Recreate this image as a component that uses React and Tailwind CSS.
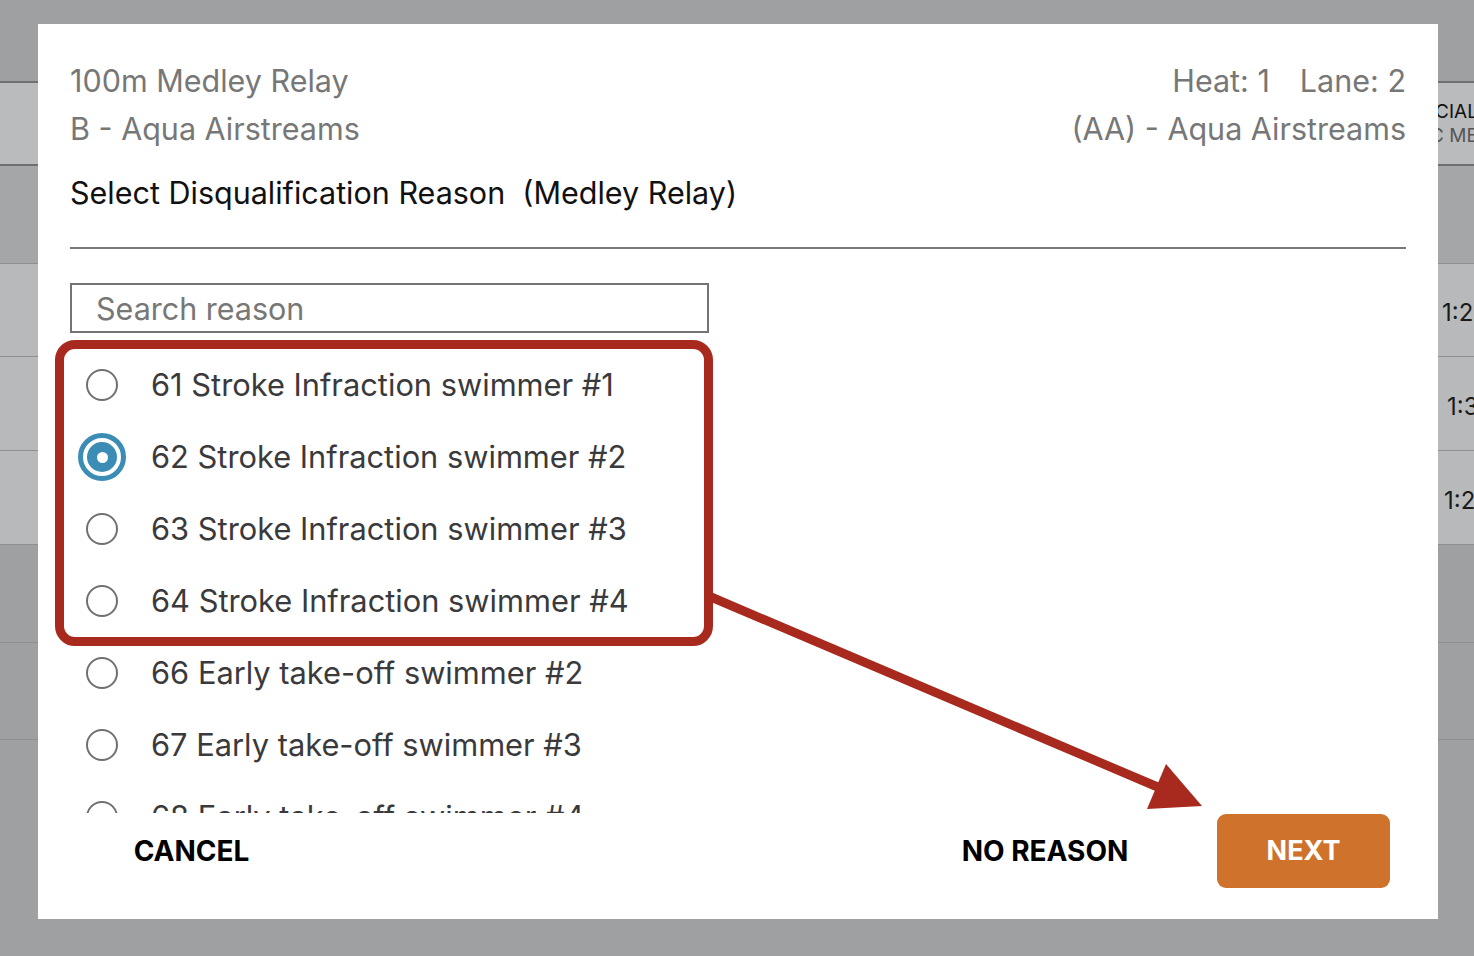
import React, { useState } from 'react';

const reasons = [
    { code: 61, label: 'Stroke Infraction swimmer #1' },
    { code: 62, label: 'Stroke Infraction swimmer #2' },
    { code: 63, label: 'Stroke Infraction swimmer #3' },
    { code: 64, label: 'Stroke Infraction swimmer #4' },
    { code: 66, label: 'Early take-off swimmer #2' },
    { code: 67, label: 'Early take-off swimmer #3' },
    { code: 68, label: 'Early take-off swimmer #4' },
];

const Radio = ({ checked }) => (
    <div className="w-[48px] h-[48px] flex items-center justify-center shrink-0">
        {checked ? (
            <div className="w-[48px] h-[48px] rounded-full border-[5px] border-[#3b8db5] flex items-center justify-center">
                <div className="w-[30px] h-[30px] rounded-full bg-[#3b8db5] flex items-center justify-center">
                    <div className="w-[11px] h-[11px] rounded-full bg-white" />
                </div>
            </div>
        ) : (
            <div className="w-[32px] h-[32px] rounded-full border-2 border-[#707070] bg-white" />
        )}
    </div>
);

export default function App() {
    const [selected, setSelected] = useState(62);
    const [query, setQuery] = useState('');

    const list = reasons.filter(r =>
        `${r.code} ${r.label}`.toLowerCase().includes(query.toLowerCase())
    );

    return (
        <div className="relative w-[1474px] h-[956px] overflow-hidden bg-[#9fa0a2] font-['Inter','Liberation_Sans',sans-serif]">
            {/* Background table, dimmed */}
            <div className="flex flex-col">
                <div className="h-[83px] border-b-2 border-[#6e6f71]" />
                <div className="h-[83px] bg-[#babbbc] border-b-2 border-[#6e6f71] flex flex-col justify-center pl-[1430px] whitespace-nowrap">
                    <span className="text-[19px] leading-[24px] text-[#111]">ICIAL</span>
                    <span className="text-[19px] leading-[24px] text-[#555]">C MEDLEY</span>
                </div>
                <div className="h-[98px] bg-[#a5a6a7] border-b border-[#8e8f91]" />
                <div className="h-[93px] bg-[#b8b9ba] border-b border-[#8e8f91] flex items-center pt-[6px] pl-[1442px] whitespace-nowrap text-[24px] text-[#1a1a1a]">1:26.41</div>
                <div className="h-[94px] bg-[#b8b9ba] border-b border-[#8e8f91] flex items-center pt-[6px] pl-[1447px] whitespace-nowrap text-[24px] text-[#1a1a1a]">1:31.07</div>
                <div className="h-[94px] bg-[#b8b9ba] border-b border-[#8e8f91] flex items-center pt-[6px] pl-[1444px] whitespace-nowrap text-[24px] text-[#1a1a1a]">1:28.90</div>
                <div className="h-[98px] border-b border-[#8e8f91]" />
                <div className="h-[97px] border-b border-[#8e8f91]" />
            </div>

            {/* Modal */}
            <div className="absolute left-[38px] top-[24px] w-[1400px] h-[895px] bg-white flex flex-col px-[32px] pt-[33px]">
                <div className="flex justify-between text-[30.5px] leading-[48px] text-[#777]">
                    <div>
                        <div>100m Medley Relay</div>
                        <div>B - Aqua Airstreams</div>
                    </div>
                    <div className="text-right">
                        <div>
                            Heat: 1<span className="inline-block w-[30px]" />Lane: 2
                        </div>
                        <div>(AA) - Aqua Airstreams</div>
                    </div>
                </div>

                <h2 className="mt-[16px] text-[30.5px] leading-[48px] text-[#111]">
                    Select Disqualification Reason&nbsp; (Medley Relay)
                </h2>

                <div className="mt-[30px] h-[2px] bg-[#7a7a7a]" />

                <input
                    type="text"
                    value={query}
                    onChange={(e) => setQuery(e.target.value)}
                    placeholder="Search reason"
                    className="mt-[34px] w-[639px] h-[50px] border-2 border-[#747474] px-[24px] text-[30.5px] text-[#333] placeholder-[#777] outline-none"
                />

                <div className="mt-[16px] h-[464px] overflow-hidden">
                    {list.map(r => (
                        <label
                            key={r.code}
                            onClick={() => setSelected(r.code)}
                            className="h-[72px] flex items-center gap-[25px] pl-[8px] cursor-pointer"
                        >
                            <Radio checked={selected === r.code} />
                            <span className="text-[30.8px] text-[#3a3a3c]">
                                {r.code} {r.label}
                            </span>
                        </label>
                    ))}
                </div>

                {/* Actions */}
                <div className="h-[76px] flex items-center">
                    <button className="ml-[35px] w-[173px] h-[74px] text-[28px] font-bold text-black">
                        CANCEL
                    </button>
                    <div className="flex-1" />
                    <button className="w-[200px] h-[74px] text-[28px] font-bold text-black">
                        NO REASON
                    </button>
                    <button className="ml-[72px] mr-[16px] w-[173px] h-[74px] rounded-[9px] bg-[#cf722c] text-[27px] font-bold text-white">
                        NEXT
                    </button>
                </div>
            </div>

            {/* Annotation: highlight box */}
            <div className="absolute left-[55px] top-[340px] w-[658px] h-[306px] border-[9px] border-[#a82a1e] rounded-[20px] pointer-events-none" />

            {/* Annotation: arrow */}
            <svg className="absolute left-0 top-0 pointer-events-none" width="1474" height="956">
                <line x1="711" y1="597" x2="1160" y2="788" stroke="#a82a1e" strokeWidth="9" />
                <polygon points="1166,764 1147,809 1202,806" fill="#a82a1e" />
            </svg>
        </div>
    );
}
